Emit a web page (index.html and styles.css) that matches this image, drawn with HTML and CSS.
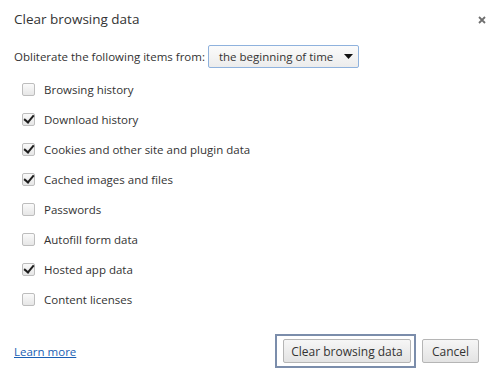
FILE: index.html
```html
<!DOCTYPE html>
<html lang="en">

<head>
    <meta charset="UTF-8">
    <meta name="viewport" content="width=device-width, initial-scale=1.0">
    <title>Clear browsing data</title>
    <link rel="stylesheet" href="styles.css">
</head>

<body>
    <div class="dialog">
        <div class="dialog-title">Clear browsing data</div>
        <button class="close-btn" aria-label="Close">
            <svg viewBox="0 0 8 8" width="8" height="8">
                <path d="M1 1L7 7M7 1L1 7" stroke="#6f6f6f" stroke-width="1.8" />
            </svg>
        </button>

        <div class="range-row">
            <span class="range-label">Obliterate the following items from:</span>
            <div class="select">
                <span>the beginning of time</span>
                <svg class="select-arrow" viewBox="0 0 9 5" width="9" height="5">
                    <path d="M0 0H9L4.5 5z" fill="#111" />
                </svg>
            </div>
        </div>

        <div class="option-list">
            <label class="option"><span class="checkbox"></span>Browsing history</label>
            <label class="option"><span class="checkbox checked"></span>Download history</label>
            <label class="option"><span class="checkbox checked"></span>Cookies and other site and plugin data</label>
            <label class="option"><span class="checkbox checked"></span>Cached images and files</label>
            <label class="option"><span class="checkbox"></span>Passwords</label>
            <label class="option"><span class="checkbox"></span>Autofill form data</label>
            <label class="option"><span class="checkbox checked"></span>Hosted app data</label>
            <label class="option"><span class="checkbox"></span>Content licenses</label>
        </div>

        <div class="footer">
            <a class="learn-more" href="#">Learn more</a>
            <div class="actions">
                <span class="focus-ring"><button class="btn btn-primary">Clear browsing data</button></span>
                <button class="btn btn-cancel">Cancel</button>
            </div>
        </div>
    </div>
</body>

</html>
```

FILE: styles.css
```css
body {
    margin: 0;
    background: #fff;
    font-family: "Open Sans", "Noto Sans", sans-serif;
    font-size: 11.5px;
    color: #333;
}

.dialog {
    position: relative;
    padding: 0 14px;
}

.dialog-title {
    margin-top: 9px;
    height: 20px;
    line-height: 20px;
    font-size: 13.5px;
    color: #333;
}

.close-btn {
    position: absolute;
    top: 6px;
    right: 7px;
    width: 10px;
    height: 10px;
    padding: 0;
    border: 0;
    background: none;
    display: flex;
    align-items: center;
    justify-content: center;
}

.range-row {
    margin-top: 16px;
    display: flex;
    align-items: center;
    gap: 3px;
}

.select {
    box-sizing: border-box;
    width: 151px;
    height: 23px;
    display: flex;
    align-items: center;
    justify-content: space-between;
    padding: 0 5px 0 10px;
    border: 1px solid #8fb2dd;
    border-radius: 2px;
    background: linear-gradient(#fbfbfb, #ececec);
    color: #333;
}

.option-list {
    margin-top: 6px;
    padding-left: 8px;
}

.option {
    height: 30px;
    display: flex;
    align-items: center;
    gap: 9px;
}

.checkbox {
    box-sizing: border-box;
    width: 13px;
    height: 13px;
    border: 1px solid #bdbdbd;
    border-radius: 2px;
    background: linear-gradient(#fafafa, #e6e6e6);
    position: relative;
}

.checkbox.checked::after {
    content: "";
    position: absolute;
    left: 3px;
    top: -1px;
    width: 4px;
    height: 8px;
    border: solid #1e1e1e;
    border-width: 0 2.5px 2.5px 0;
    transform: rotate(40deg);
}

.footer {
    margin-top: 20px;
    display: flex;
    align-items: center;
    justify-content: space-between;
}

.learn-more {
    color: #1a5fb4;
    text-decoration: underline;
}

.actions {
    display: flex;
    align-items: center;
    gap: 6px;
    margin-right: 1px;
}

.focus-ring {
    display: flex;
    padding: 3px 3px 3px 6px;
    border: 2px solid #7b8dab;
}

.btn {
    box-sizing: border-box;
    height: 24px;
    padding: 0;
    border: 1px solid #b5b5b5;
    border-radius: 2px;
    background: linear-gradient(#f6f6f6, #e3e3e3);
    font-family: inherit;
    font-size: 12px;
    color: #333;
}

.btn-primary {
    width: 128px;
}

.btn-cancel {
    width: 57px;
}
```
